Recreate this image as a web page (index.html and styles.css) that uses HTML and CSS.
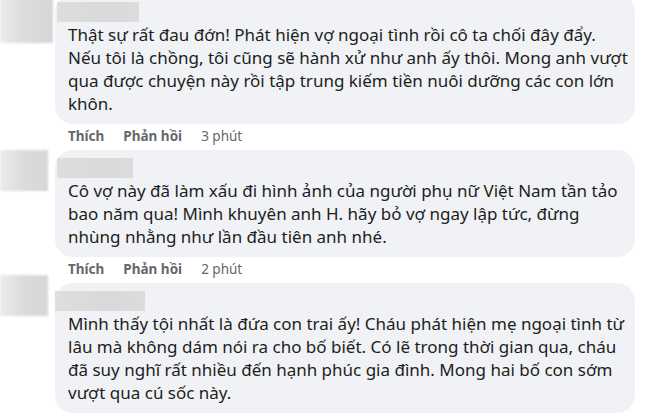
FILE: index.html
```html
<!DOCTYPE html>
<html lang="vi">
<head>
<meta charset="utf-8">
<link rel="stylesheet" href="styles.css">
</head>
<body>
<div class="thread">
  <div class="comment first">
    <div class="avatar-col"><div class="avatar av1"></div></div>
    <div class="body">
      <div class="bubble">
        <div class="name n1"></div>
        <div class="text">Thật sự rất đau đớn! Phát hiện vợ ngoại tình rồi cô ta chối đây đẩy.<br>Nếu tôi là chồng, tôi cũng sẽ hành xử như anh ấy thôi. Mong anh vượt<br>qua được chuyện này rồi tập trung kiếm tiền nuôi dưỡng các con lớn<br>khôn.</div>
      </div>
      <div class="actions"><span class="act">Thích</span><span class="act">Phản hồi</span><span class="time">3 phút</span></div>
    </div>
  </div>
  <div class="comment">
    <div class="avatar-col"><div class="avatar av2"></div></div>
    <div class="body">
      <div class="bubble">
        <div class="name n2"></div>
        <div class="text">Cô vợ này đã làm xấu đi hình ảnh của người phụ nữ Việt Nam tần tảo<br>bao năm qua! Mình khuyên anh H. hãy bỏ vợ ngay lập tức, đừng<br>nhùng nhằng như lần đầu tiên anh nhé.</div>
      </div>
      <div class="actions"><span class="act">Thích</span><span class="act">Phản hồi</span><span class="time">2 phút</span></div>
    </div>
  </div>
  <div class="comment">
    <div class="avatar-col"><div class="avatar av3"></div></div>
    <div class="body">
      <div class="bubble">
        <div class="name n3"></div>
        <div class="text">Mình thấy tội nhất là đứa con trai ấy! Cháu phát hiện mẹ ngoại tình từ<br>lâu mà không dám nói ra cho bố biết. Có lẽ trong thời gian qua, cháu<br>đã suy nghĩ rất nhiều đến hạnh phúc gia đình. Mong hai bố con sớm<br>vượt qua cú sốc này.</div>
      </div>
    </div>
  </div>
</div>
</body>
</html>
```

FILE: styles.css
```css
html, body {
  margin: 0;
  padding: 0;
  background: #ffffff;
  overflow: hidden;
}
body {
  width: 660px;
  height: 416px;
  font-family: "Noto Sans", "Open Sans", sans-serif;
  color: #1c1e21;
}
.thread {
  display: flex;
  flex-direction: column;
}
.comment {
  display: flex;
  margin-top: 4px;
}
.comment.first {
  margin-top: -6px;
}
.avatar-col {
  width: 55px;
  flex: none;
}
.avatar {
  background: linear-gradient(90deg, #ececec 0%, #dcdcdc 45%, #d6d6d6 100%);
  filter: blur(1px);
}
.av1 { width: 53px; height: 49px; }
.av2 { width: 48px; height: 41px; }
.av3 { width: 48px; height: 41px; margin-top: -8px; }
.body {
  width: 580px;
}
.bubble {
  background: #f0f2f5;
  border-radius: 18px;
  padding: 8px 12px 9px 13px;
}
.name {
  height: 20px;
  margin-left: -11px;
  background: linear-gradient(90deg, #dedede, #d9d9d9 60%, #dcdcdc);
  filter: blur(0.6px);
}
.n1 { width: 82px; }
.n2 { width: 76px; }
.n3 { width: 90px; margin-left: -13px; }
.text {
  margin-top: 1px;
  font-size: 17px;
  line-height: 23px;
  white-space: nowrap;
}
.actions {
  display: flex;
  gap: 19px;
  margin-top: 3px;
  padding-left: 13px;
  font-size: 13.5px;
  line-height: 19px;
  color: #65676b;
}
.act { font-weight: 700; }
.time { font-weight: 400; }
```
